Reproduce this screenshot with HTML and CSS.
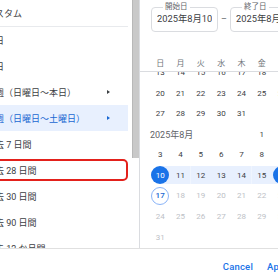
FILE: index.html
```html
<!DOCTYPE html>
<html lang="ja">
<head>
  <meta charset="UTF-8">
  <title>期間の選択</title>
  <link rel="stylesheet" href="styles.css">
</head>
<body>
  <div class="dialog">
    <div class="dialog-body">
      <!-- preset ranges -->
      <div class="presets">
        <ul class="preset-list">
          <li>カスタム</li>
          <li class="divider"></li>
          <li>今日</li>
          <li>昨日</li>
          <li>今週（日曜日～本日）<span class="caret"></span></li>
          <li class="active">先週（日曜日～土曜日）<span class="caret"></span></li>
          <li>過去 7 日間</li>
          <li class="marked">過去 28 日間</li>
          <li>過去 30 日間</li>
          <li>過去 90 日間</li>
          <li>過去 12 か月間</li>
        </ul>
        <div class="scrollbar"><div class="thumb"></div></div>
      </div>

      <!-- calendar -->
      <div class="calendar">
        <div class="range-inputs">
          <fieldset class="date-field">
            <legend>開始日</legend>
            <div class="date-value">2025年8月10日</div>
          </fieldset>
          <span class="dash">–</span>
          <fieldset class="date-field">
            <legend>終了日</legend>
            <div class="date-value">2025年8月16日</div>
          </fieldset>
        </div>

        <div class="weekdays">
          <span>日</span><span>月</span><span>火</span><span>水</span><span>木</span><span>金</span><span>土</span>
        </div>

        <div class="months">
          <div class="month-grid">
            <span class="d">13</span><span class="d">14</span><span class="d">15</span><span class="d">16</span><span class="d">17</span><span class="d">18</span><span class="d">19</span>
            <span class="d">20</span><span class="d">21</span><span class="d">22</span><span class="d">23</span><span class="d">24</span><span class="d">25</span><span class="d">26</span>
            <span class="d">27</span><span class="d">28</span><span class="d">29</span><span class="d">30</span><span class="d">31</span><span></span><span></span>

            <span class="month-label">2025年8月</span><span class="d">1</span><span class="d">2</span>
            <span class="d">3</span><span class="d">4</span><span class="d">5</span><span class="d">6</span><span class="d">7</span><span class="d">8</span><span class="d">9</span>
            <span class="d in-range start"><i>10</i></span><span class="d in-range">11</span><span class="d in-range">12</span><span class="d in-range">13</span><span class="d in-range">14</span><span class="d in-range">15</span><span class="d in-range end"><i>16</i></span>
            <span class="d today"><i>17</i></span><span class="d off">18</span><span class="d off">19</span><span class="d off">20</span><span class="d off">21</span><span class="d off">22</span><span class="d off">23</span>
            <span class="d off">24</span><span class="d off">25</span><span class="d off">26</span><span class="d off">27</span><span class="d off">28</span><span class="d off">29</span><span class="d off">30</span>
            <span class="d off">31</span>
          </div>
        </div>
      </div>
    </div>

    <div class="actions">
      <button class="text-btn">Cancel</button>
      <button class="text-btn">Apply</button>
    </div>
  </div>
</body>
</html>
```

FILE: styles.css
```css
html, body {
  margin: 0;
  padding: 0;
  background: #fff;
  overflow: hidden;
}
body {
  font-family: Roboto, "Noto Sans CJK JP", sans-serif;
  color: #3c4043;
}
.dialog {
  width: 340px;
  margin-left: -30px;
}
.dialog-body {
  display: flex;
  height: 248px;
  border-bottom: 1px solid #e0e0e0;
}

/* Preset list */
.presets {
  display: flex;
  flex: none;
  width: 169px;
  overflow: hidden;
}
.preset-list {
  list-style: none;
  margin: 0;
  padding: 0;
  width: 162px;
  flex: none;
}
.preset-list li {
  position: relative;
  display: flex;
  align-items: center;
  height: 26px;
  padding: 0 18px 0 16px;
  margin-right: 4px;
  font-size: 9px;
  white-space: nowrap;
}
.preset-list li.divider {
  height: 1px;
  padding: 0;
  background: #e8eaed;
}
.preset-list li.active {
  background: #e8f0fe;
  color: #1967d2;
}
.preset-list li.marked::after {
  content: "";
  position: absolute;
  left: 2px;
  right: 0;
  top: 2px;
  bottom: 2px;
  border: 2px solid #e3211b;
  border-radius: 5px;
}
.caret {
  margin-left: auto;
  border-left: 3px solid currentColor;
  border-top: 2.5px solid transparent;
  border-bottom: 2.5px solid transparent;
}
.scrollbar {
  width: 7px;
  flex: none;
}
.thumb {
  height: 158px;
  background: #c9c9c9;
  border-left: 1px solid #b8b8b8;
  box-sizing: border-box;
}

/* Calendar */
.calendar {
  flex: 1;
  min-width: 0;
  display: flex;
  flex-direction: column;
  border-left: 1px solid #dadce0;
}
.range-inputs {
  display: flex;
  align-items: flex-start;
  padding: 3px 0 0 11px;
}
.date-field {
  flex: none;
  width: 67px;
  min-width: 0;
  margin: 0;
  padding: 2px 5px 6px;
  box-sizing: border-box;
  border: 1px solid #dadce0;
  border-radius: 4px;
}
.date-field legend {
  margin-left: 6px;
  padding: 0 2px;
  font-size: 7.5px;
  line-height: 8px;
  color: #5f6368;
}
.date-value {
  font-size: 9.3px;
  line-height: 12px;
  white-space: nowrap;
  overflow: hidden;
}
.dash {
  flex: none;
  width: 12px;
  margin-top: 10px;
  text-align: center;
  font-size: 9px;
  line-height: 12px;
  color: #5f6368;
}
.weekdays,
.month-grid {
  display: grid;
  grid-template-columns: repeat(7, 20.33px);
  padding-left: 10px;
}
.weekdays {
  height: 18px;
  margin-top: 21px;
  align-items: center;
  justify-items: center;
  font-size: 8px;
  color: #70757a;
  border-bottom: 1px solid #dadce0;
}
.months {
  flex: 1;
  overflow: hidden;
}
.month-grid {
  margin-top: -9.9px;
  grid-auto-rows: 20.6px;
}
.d {
  display: flex;
  align-items: center;
  justify-content: center;
  font-size: 8px;
}
.d i {
  display: flex;
  align-items: center;
  justify-content: center;
  width: 18px;
  height: 18px;
  border-radius: 50%;
  box-sizing: border-box;
  font-style: normal;
}
.month-label {
  grid-column: span 5;
  align-self: center;
  font-size: 9px;
  color: #5f6368;
}
.in-range {
  background: linear-gradient(#e8f0fe, #e8f0fe) center / 100% 18px no-repeat;
}
.in-range.start {
  background-size: 50% 18px;
  background-position: right center;
}
.in-range.end {
  background-size: 50% 18px;
  background-position: left center;
}
.start i,
.end i {
  background: #1a73e8;
  color: #fff;
}
.today i {
  border: 1px solid #8ab4f8;
  color: #1967d2;
  font-weight: 500;
}
.off {
  color: #bdc1c6;
}

/* Footer buttons */
.actions {
  display: flex;
  justify-content: flex-end;
  align-items: center;
  height: 34px;
  padding-right: 12px;
  gap: 2px;
}
.text-btn {
  border: none;
  background: none;
  padding: 4px 6px;
  font-family: Roboto, sans-serif;
  font-size: 9.5px;
  font-weight: 500;
  letter-spacing: 0.2px;
  color: #1a73e8;
}
```
